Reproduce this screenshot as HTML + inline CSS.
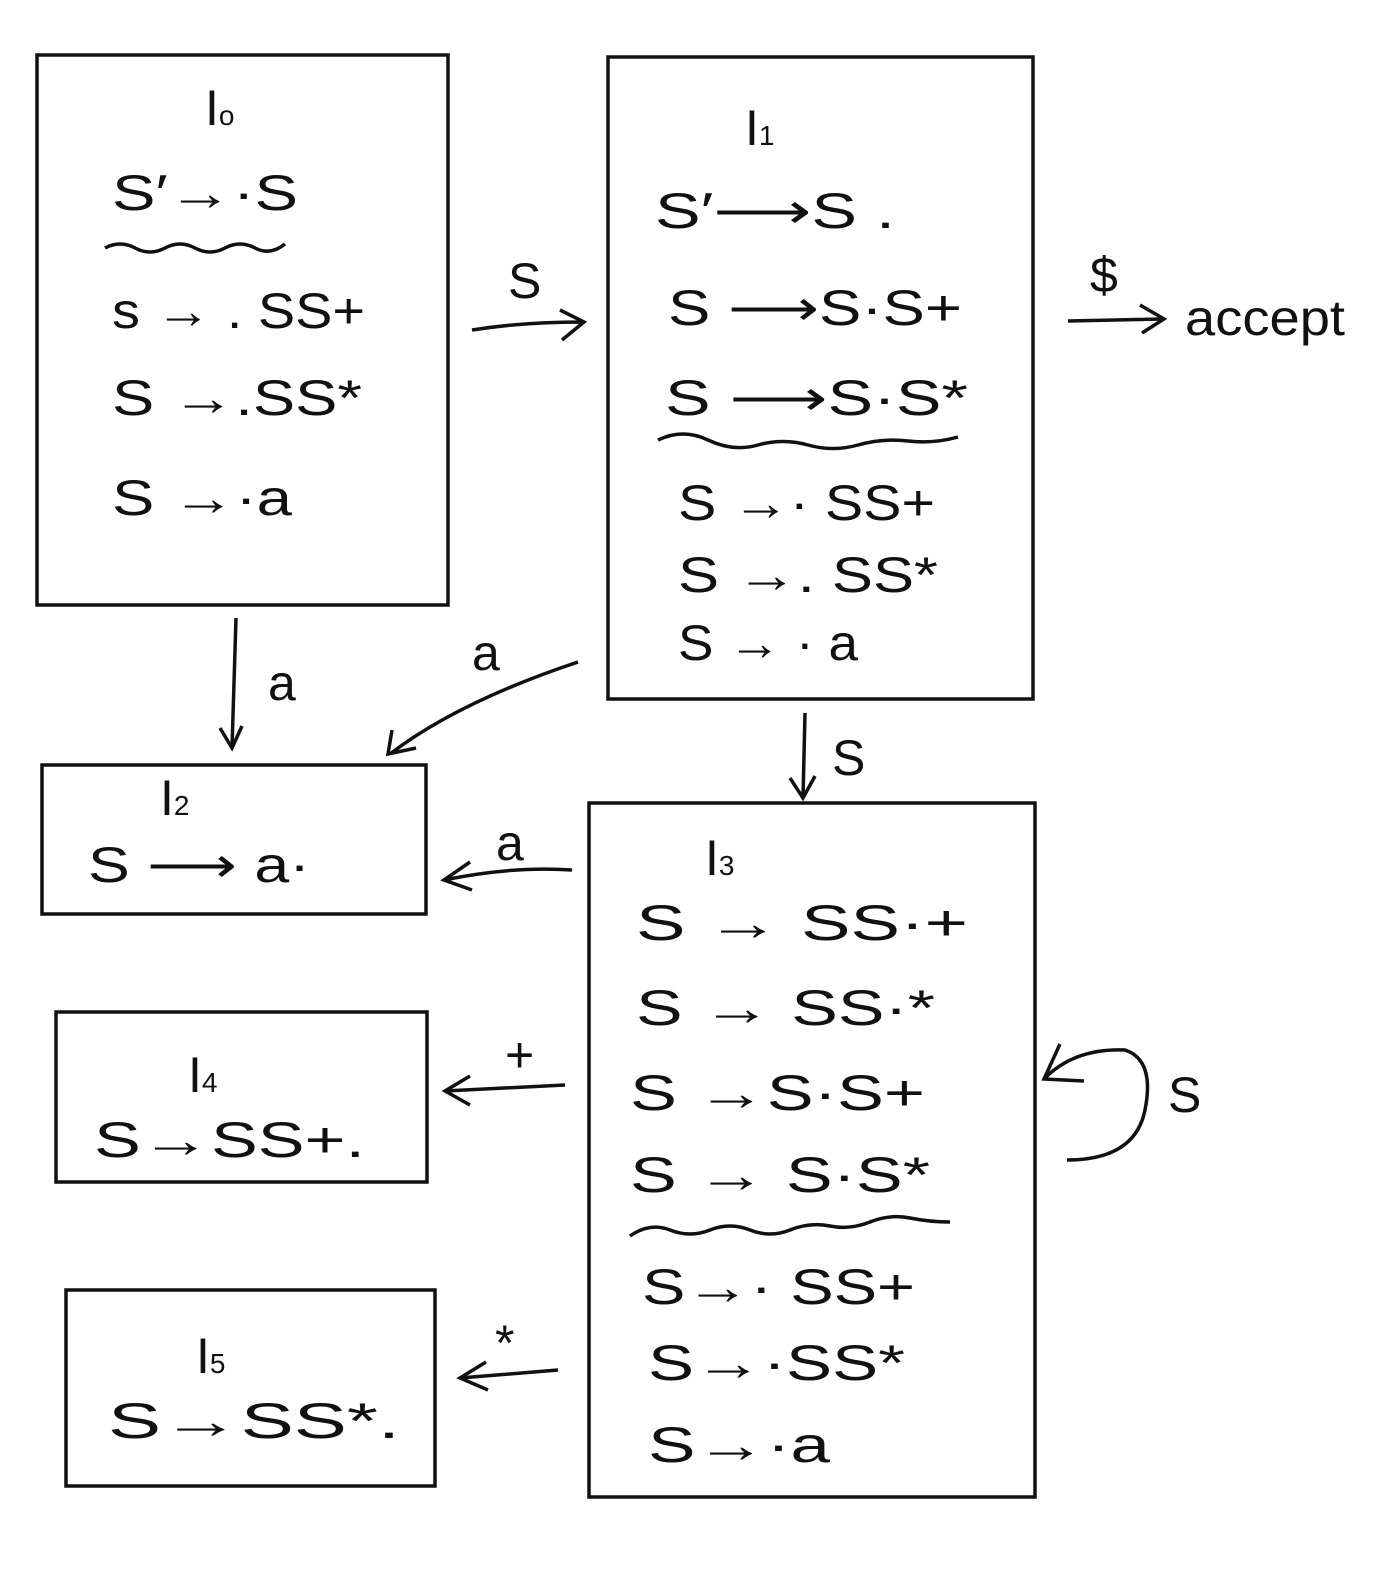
<!DOCTYPE html>
<html><head><meta charset="utf-8"><style>
html,body{margin:0;padding:0;background:#fff;}
svg{display:block}
text{font-family:"Liberation Sans",sans-serif;font-size:50px;fill:#111;}
</style></head><body>
<svg width="1386" height="1580" viewBox="0 0 1386 1580" xmlns="http://www.w3.org/2000/svg">
<g fill="none" stroke="#111" stroke-width="3.5">
<rect x="37" y="55" width="411" height="550"/>
<rect x="608" y="57" width="425" height="642"/>
<rect x="42" y="765" width="384" height="149"/>
<rect x="589" y="803" width="446" height="694"/>
<rect x="56" y="1012" width="371" height="170"/>
<rect x="66" y="1290" width="369" height="196"/>
<path d="M105 248 q15 -8 30 0 t30 0 t30 0 t30 0 t30 0 t30 -4"/>
<path d="M658 440 q25 -12 50 0 t50 5 t50 0 t50 0 t50 -4 t50 -4"/>
<path d="M630 1236 q20 -14 40 -6 t40 0 t40 0 t40 0 t40 -4 t40 -4 t40 -4 t40 4"/>
<path d="M472 330 q50 -8 110 -8 M560 310 l24 12 l-22 18"/>
<path d="M1068 321 l95 -2 M1140 305 l24 14 l-22 14"/>
<path d="M236 618 l-4 130 M220 728 l12 20 l10 -22"/>
<path d="M578 662 q-120 40 -188 92 M392 730 l-4 24 l28 -6"/>
<path d="M805 713 l-2 85 M790 778 l13 20 l12 -22"/>
<path d="M572 870 q-60 -4 -128 10 M470 862 l-26 18 l28 10"/>
<path d="M565 1085 l-120 6 M470 1076 l-25 15 l25 14"/>
<path d="M558 1370 l-98 8 M486 1362 l-26 16 l28 12"/>
<path d="M1045 1078 q30 -30 80 -28 q30 10 20 60 q-10 50 -78 50 M1060 1044 l-16 35 l40 2"/>
</g>
<text x="205" y="125">I<tspan font-size="28">o</tspan></text>
<text x="112" y="210" textLength="186" lengthAdjust="spacingAndGlyphs">S′→·S</text>
<text x="112" y="328" textLength="253" lengthAdjust="spacingAndGlyphs">s → . SS+</text>
<text x="112" y="415" textLength="250" lengthAdjust="spacingAndGlyphs">S →.SS*</text>
<text x="112" y="515" textLength="180" lengthAdjust="spacingAndGlyphs">S →·a</text>
<text x="745" y="145">I<tspan font-size="28">1</tspan></text>
<text x="655" y="228" textLength="240" lengthAdjust="spacingAndGlyphs">S′⟶S .</text>
<text x="668" y="325" textLength="294" lengthAdjust="spacingAndGlyphs">S ⟶S·S+</text>
<text x="665" y="415" textLength="303" lengthAdjust="spacingAndGlyphs">S ⟶S·S*</text>
<text x="678" y="520" textLength="257" lengthAdjust="spacingAndGlyphs">S →· SS+</text>
<text x="678" y="592" textLength="260" lengthAdjust="spacingAndGlyphs">S →. SS*</text>
<text x="678" y="660" textLength="180" lengthAdjust="spacingAndGlyphs">S → · a</text>
<text x="508" y="298">S</text>
<text x="1090" y="292">$</text>
<text x="1185" y="335" textLength="160" lengthAdjust="spacingAndGlyphs">accept</text>
<text x="268" y="700">a</text>
<text x="472" y="670">a</text>
<text x="832" y="775">S</text>
<text x="160" y="815">I<tspan font-size="28">2</tspan></text>
<text x="88" y="882" textLength="222" lengthAdjust="spacingAndGlyphs">S ⟶ a·</text>
<text x="496" y="860">a</text>
<text x="705" y="875">I<tspan font-size="28">3</tspan></text>
<text x="636" y="940" textLength="332" lengthAdjust="spacingAndGlyphs">S → SS·+</text>
<text x="636" y="1025" textLength="299" lengthAdjust="spacingAndGlyphs">S → SS·*</text>
<text x="630" y="1110" textLength="295" lengthAdjust="spacingAndGlyphs">S →S·S+</text>
<text x="630" y="1192" textLength="300" lengthAdjust="spacingAndGlyphs">S → S·S*</text>
<text x="642" y="1304" textLength="273" lengthAdjust="spacingAndGlyphs">S→· SS+</text>
<text x="648" y="1380" textLength="257" lengthAdjust="spacingAndGlyphs">S→·SS*</text>
<text x="648" y="1462" textLength="182" lengthAdjust="spacingAndGlyphs">S→·a</text>
<text x="1168" y="1112">S</text>
<text x="188" y="1092">I<tspan font-size="28">4</tspan></text>
<text x="94" y="1157" textLength="271" lengthAdjust="spacingAndGlyphs">S→SS+.</text>
<text x="505" y="1072">+</text>
<text x="196" y="1373">I<tspan font-size="28">5</tspan></text>
<text x="108" y="1438" textLength="292" lengthAdjust="spacingAndGlyphs">S→SS*.</text>
<text x="495" y="1360">*</text>
</svg>
</body></html>
